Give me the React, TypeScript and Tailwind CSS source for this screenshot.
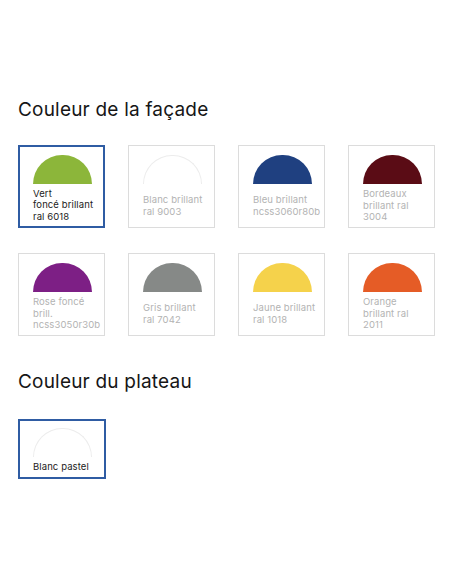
type Swatch = {
  lines: string[];
  color: string;
  selected?: boolean;
  outline?: boolean;
};

const facade: Swatch[] = [
  { lines: ["Vert", "foncé brillant", "ral 6018"], color: "bg-[#8cb63a]", selected: true },
  { lines: ["Blanc brillant", "ral 9003"], color: "bg-white", outline: true },
  { lines: ["Bleu brillant", "ncss3060r80b"], color: "bg-[#1f4080]" },
  { lines: ["Bordeaux", "brillant ral", "3004"], color: "bg-[#5a0c15]" },
  { lines: ["Rose foncé", "brill.", "ncss3050r30b"], color: "bg-[#7d1f85]" },
  { lines: ["Gris brillant", "ral 7042"], color: "bg-[#868987]" },
  { lines: ["Jaune brillant", "ral 1018"], color: "bg-[#f5d24b]" },
  { lines: ["Orange", "brillant ral", "2011"], color: "bg-[#e55c26]" },
];

const SwatchCard = ({ s, small }: { s: Swatch; small?: boolean }) => {
  return (
    <div
      className={`flex flex-col bg-white ${small ? "h-[60px] pt-[7px]" : "h-[83px] pt-[8px]"} ${
        s.selected
          ? "border-2 border-[#2f5ca3] px-[13px]"
          : "border border-[#dcdcdc] px-[14px] pt-[9px]"
      }`}
    >
      <div
        className={`h-[29px] w-[59px] shrink-0 rounded-t-full ${s.color} ${
          s.outline ? "border border-b-0 border-[#ececec]" : ""
        }`}
      />
      <div
        className={`flex flex-1 flex-col justify-center text-[9.5px] leading-[11.5px] tracking-[0.1px] ${
          s.selected ? "text-[#1c1c1c]" : "text-[#b3b3b3]"
        }`}
      >
        {s.lines.map((l) => (
          <span key={l} className="whitespace-nowrap">
            {l}
          </span>
        ))}
      </div>
    </div>
  );
};

export default function App() {
  return (
    <div className="min-h-[584px] w-[452px] bg-white px-[18px] pt-[96px] font-['Inter',sans-serif]">
      <h2 className="text-[19px] leading-[28px] font-normal tracking-[0.2px] text-[#161616]">
        Couleur de la façade
      </h2>
      <div className="mt-[21px] grid grid-cols-[repeat(4,87px)] gap-x-[23px] gap-y-[25px]">
        {facade.map((s) => (
          <SwatchCard key={s.lines.join(" ")} s={s} />
        ))}
      </div>

      <h2 className="mt-[32px] text-[19px] leading-[28px] font-normal tracking-[0.2px] text-[#161616]">
        Couleur du plateau
      </h2>
      <div className="mt-[23px] w-[88px]">
        <SwatchCard s={{ lines: ["Blanc pastel"], color: "bg-white", outline: true, selected: true }} small />
      </div>
    </div>
  );
}
